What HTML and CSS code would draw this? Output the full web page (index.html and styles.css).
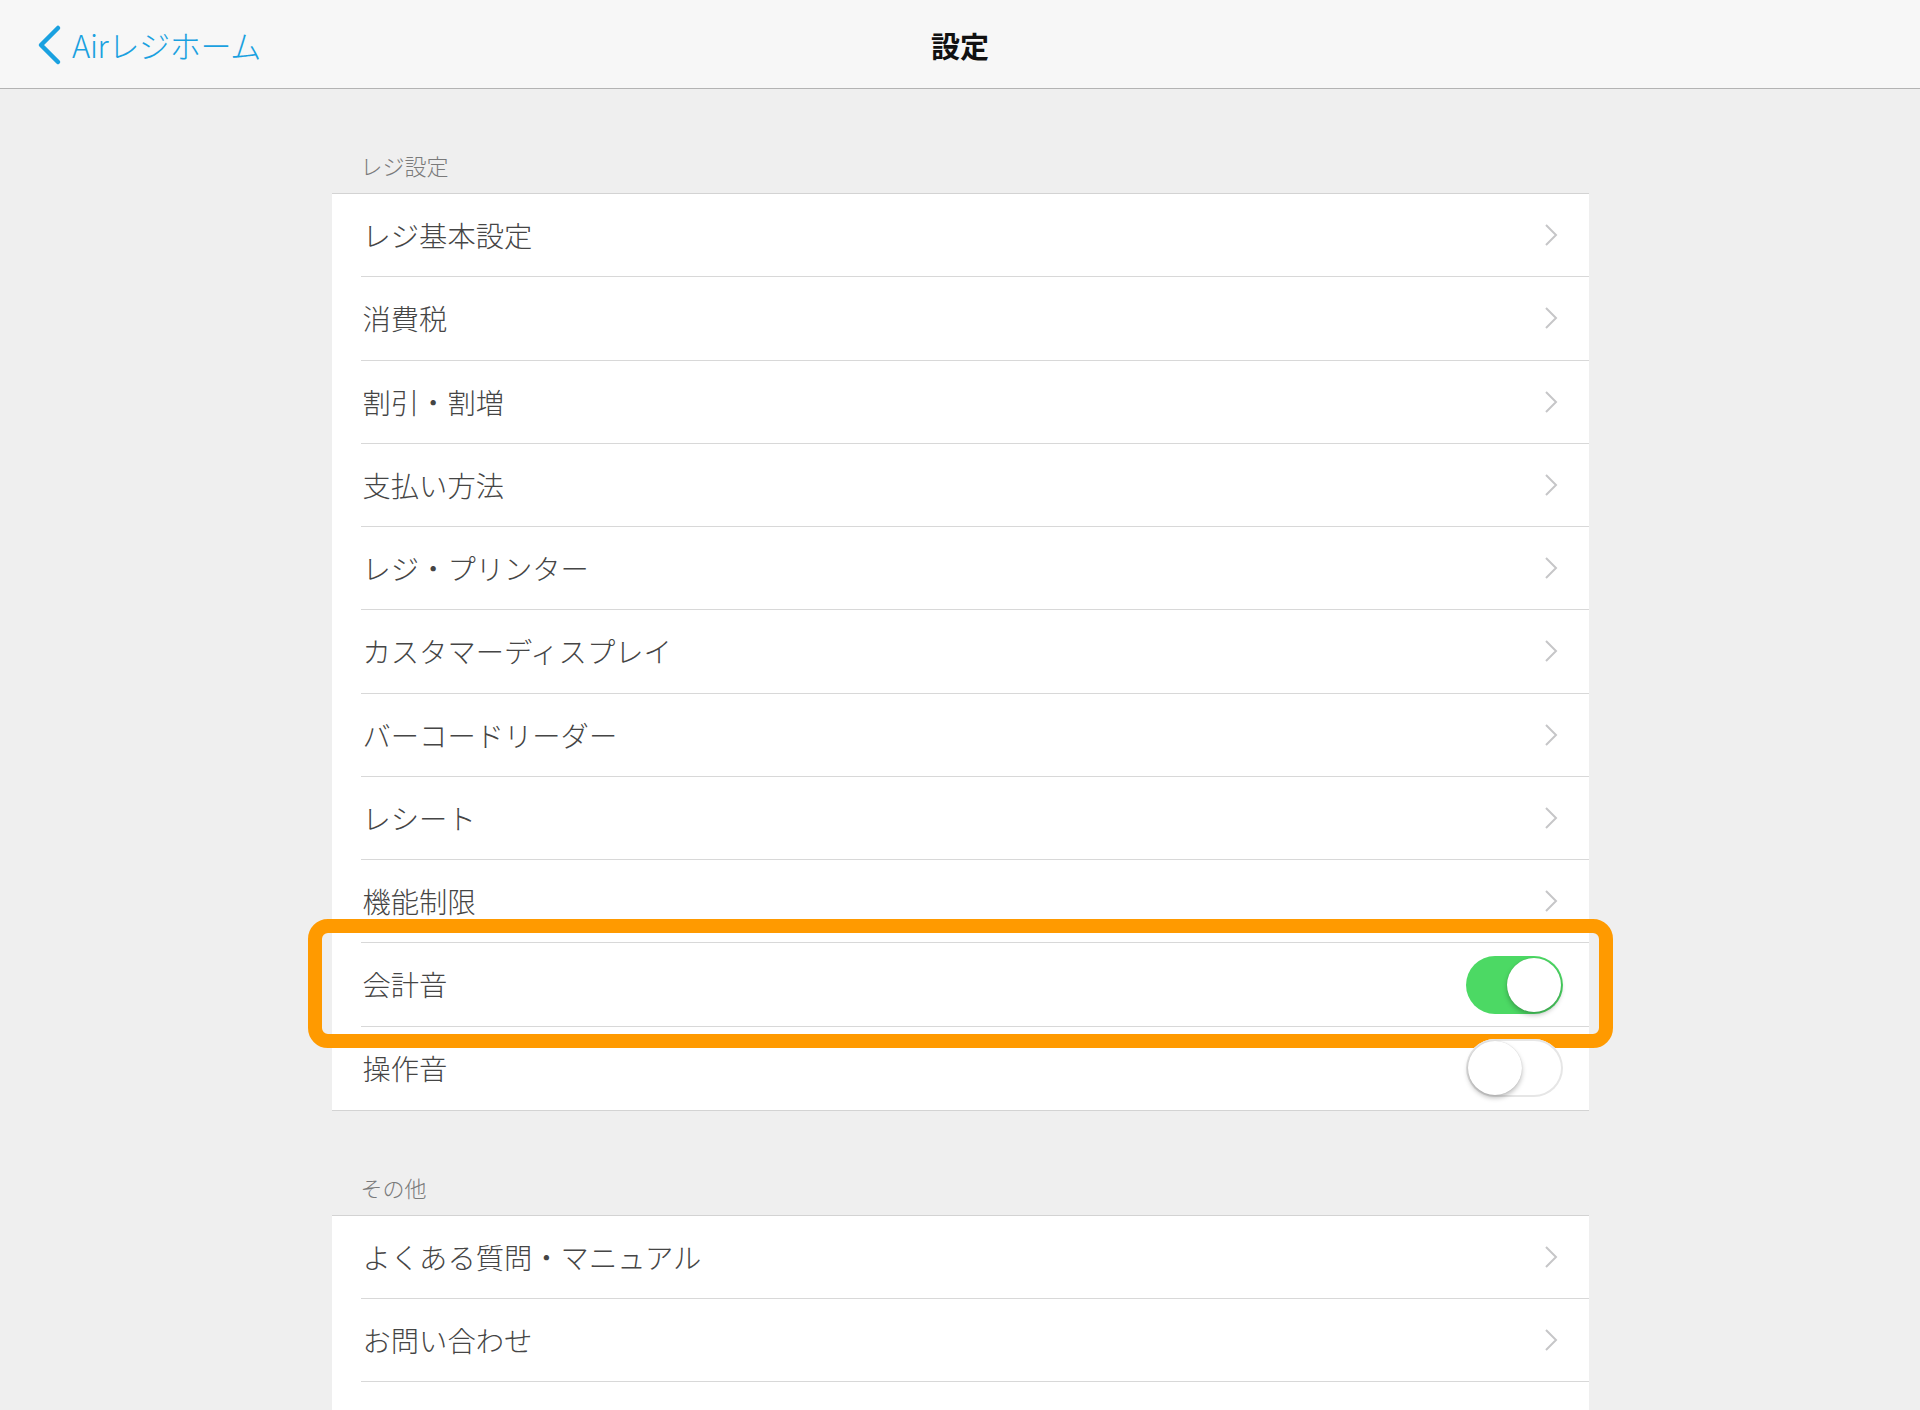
FILE: index.html
```html
<!DOCTYPE html>
<html lang="ja">
<head>
<meta charset="utf-8">
<title>設定</title>
<link rel="stylesheet" href="styles.css">
</head>
<body>
<header class="navbar">
  <a class="back" href="#">
    <svg class="back-icon" width="26" height="42" viewBox="0 0 26 42"><polyline points="22,4 5,21 22,38" fill="none" stroke="#1aa1e0" stroke-width="4.5" stroke-linecap="round" stroke-linejoin="round"/></svg>
    <span class="back-text">Airレジホーム</span>
  </a>
  <h1 class="title">設定</h1>
  <div class="spacer"></div>
</header>
<main class="content">
  <section class="section">
    <h2 class="section-title">レジ設定</h2>
    <ul class="card">
      <li class="row"><div class="row-inner"><span class="label">レジ基本設定</span><svg class="chev" width="14" height="24" viewBox="0 0 14 24"><polyline points="2,2 12,12 2,22" fill="none" stroke="#c6c6c8" stroke-width="2"/></svg></div></li>
      <li class="row"><div class="row-inner"><span class="label">消費税</span><svg class="chev" width="14" height="24" viewBox="0 0 14 24"><polyline points="2,2 12,12 2,22" fill="none" stroke="#c6c6c8" stroke-width="2"/></svg></div></li>
      <li class="row"><div class="row-inner"><span class="label">割引・割増</span><svg class="chev" width="14" height="24" viewBox="0 0 14 24"><polyline points="2,2 12,12 2,22" fill="none" stroke="#c6c6c8" stroke-width="2"/></svg></div></li>
      <li class="row"><div class="row-inner"><span class="label">支払い方法</span><svg class="chev" width="14" height="24" viewBox="0 0 14 24"><polyline points="2,2 12,12 2,22" fill="none" stroke="#c6c6c8" stroke-width="2"/></svg></div></li>
      <li class="row"><div class="row-inner"><span class="label">レジ・プリンター</span><svg class="chev" width="14" height="24" viewBox="0 0 14 24"><polyline points="2,2 12,12 2,22" fill="none" stroke="#c6c6c8" stroke-width="2"/></svg></div></li>
      <li class="row"><div class="row-inner"><span class="label">カスタマーディスプレイ</span><svg class="chev" width="14" height="24" viewBox="0 0 14 24"><polyline points="2,2 12,12 2,22" fill="none" stroke="#c6c6c8" stroke-width="2"/></svg></div></li>
      <li class="row"><div class="row-inner"><span class="label">バーコードリーダー</span><svg class="chev" width="14" height="24" viewBox="0 0 14 24"><polyline points="2,2 12,12 2,22" fill="none" stroke="#c6c6c8" stroke-width="2"/></svg></div></li>
      <li class="row"><div class="row-inner"><span class="label">レシート</span><svg class="chev" width="14" height="24" viewBox="0 0 14 24"><polyline points="2,2 12,12 2,22" fill="none" stroke="#c6c6c8" stroke-width="2"/></svg></div></li>
      <li class="row"><div class="row-inner"><span class="label">機能制限</span><svg class="chev" width="14" height="24" viewBox="0 0 14 24"><polyline points="2,2 12,12 2,22" fill="none" stroke="#c6c6c8" stroke-width="2"/></svg></div></li>
      <li class="row row-highlight"><div class="row-inner"><span class="label">会計音</span><span class="toggle toggle-on"><span class="knob"></span></span></div><div class="highlight"></div></li>
      <li class="row"><div class="row-inner"><span class="label">操作音</span><span class="toggle toggle-off"><span class="knob"></span></span></div></li>
    </ul>
  </section>
  <section class="section">
    <h2 class="section-title">その他</h2>
    <ul class="card">
      <li class="row"><div class="row-inner"><span class="label">よくある質問・マニュアル</span><svg class="chev" width="14" height="24" viewBox="0 0 14 24"><polyline points="2,2 12,12 2,22" fill="none" stroke="#c6c6c8" stroke-width="2"/></svg></div></li>
      <li class="row"><div class="row-inner"><span class="label">お問い合わせ</span><svg class="chev" width="14" height="24" viewBox="0 0 14 24"><polyline points="2,2 12,12 2,22" fill="none" stroke="#c6c6c8" stroke-width="2"/></svg></div></li>
      <li class="row"><div class="row-inner"><span class="label">利用規約</span><svg class="chev" width="14" height="24" viewBox="0 0 14 24"><polyline points="2,2 12,12 2,22" fill="none" stroke="#c6c6c8" stroke-width="2"/></svg></div></li>
    </ul>
  </section>
</main>
</body>
</html>
```
FILE: styles.css
```css
* { box-sizing: border-box; }
html, body {
  margin: 0;
  padding: 0;
  height: 1410px;
  overflow: hidden;
}
body {
  background: #efefef;
  font-family: "Noto Sans CJK JP", "Noto Sans", sans-serif;
  color: #4a4a4a;
}
.navbar {
  height: 89px;
  background: #f7f7f7;
  border-bottom: 1px solid #b3b3b3;
  display: grid;
  grid-template-columns: 1fr auto 1fr;
  align-items: center;
}
.back {
  display: flex;
  align-items: center;
  text-decoration: none;
  padding-left: 36px;
  gap: 10px;
  color: #1aa1e0;
}
.back-icon { display: block; margin-top: 2px; }
.back-text {
  font-size: 31px;
  font-weight: 300;
  line-height: 1;
  letter-spacing: -0.3px;
}
.title {
  margin: 2px 0 0 0;
  font-size: 29px;
  font-weight: 700;
  color: #111;
  line-height: 1;
}
.content {
  display: flex;
  flex-direction: column;
  align-items: center;
}
.section {
  width: 1257px;
  padding-top: 60px;
}
.section-title {
  margin: 0 0 12px 0;
  padding-left: 29px;
  font-size: 22px;
  font-weight: 300;
  line-height: 32px;
  color: #7a7a7a;
}
.card {
  list-style: none;
  margin: 0;
  padding: 0;
  background: #fff;
  border-top: 1px solid #d3d3d3;
  border-bottom: 1px solid #d3d3d3;
}
.row {
  position: relative;
  height: 83.27px;
  padding-left: 29px;
}
.row-inner {
  height: 100%;
  display: flex;
  align-items: center;
  justify-content: space-between;
  padding-left: 2px;
  padding-right: 31px;
  border-bottom: 1px solid #d8d8d8;
}
.row:last-child .row-inner { border-bottom: none; }
.label {
  font-size: 28.3px;
  font-weight: 300;
  line-height: 1;
  color: #454545;
}
.chev { display: block; }
.toggle {
  position: relative;
  display: block;
  width: 97px;
  height: 58px;
  border-radius: 29px;
  margin-right: -5px;
}
.toggle-on {
  background: #4cd964;
}
.toggle-off {
  background: #fff;
  box-shadow: inset 0 0 0 2px #e6e6e6;
}
.knob {
  position: absolute;
  top: 2px;
  width: 54px;
  height: 54px;
  border-radius: 50%;
  background: #fff;
  box-shadow: 0 3px 5px rgba(0,0,0,0.25), 0 0 1px rgba(0,0,0,0.2);
}
.toggle-on .knob { right: 2px; }
.toggle-off .knob { left: 2px; }
.highlight {
  position: absolute;
  left: -24px;
  right: -24px;
  top: -24px;
  bottom: -21px;
  border: 14px solid #ff9a00;
  border-radius: 20px;
  pointer-events: none;
}
```
